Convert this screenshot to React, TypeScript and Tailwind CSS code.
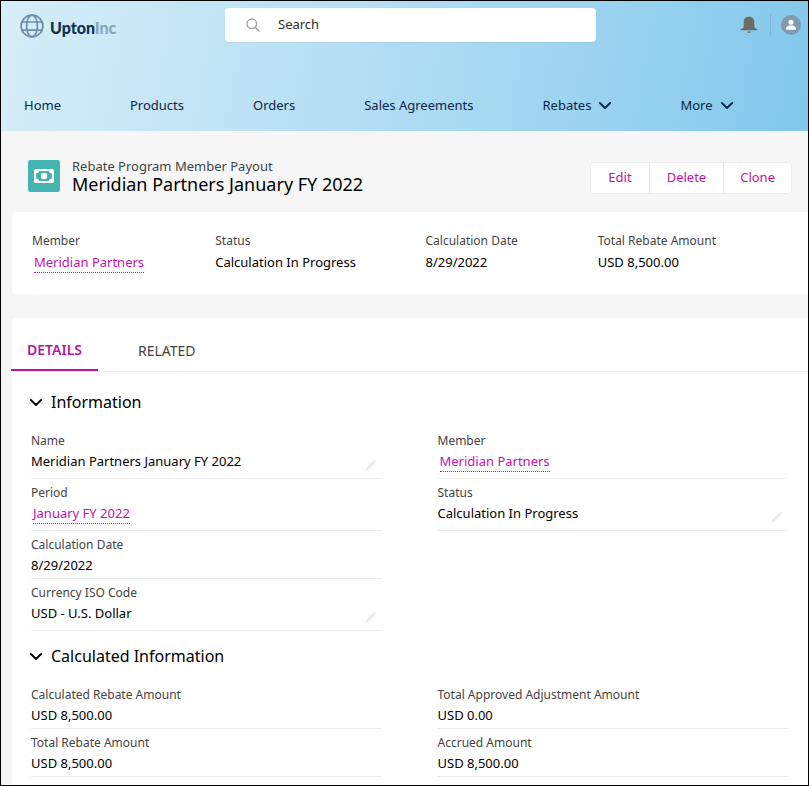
import type { ReactNode } from "react";
import { useState } from "react";

const navItems = [
  { label: "Home" },
  { label: "Products" },
  { label: "Orders" },
  { label: "Sales Agreements" },
  { label: "Rebates", menu: true },
  { label: "More", menu: true },
];

function Chevron() {
  return (
    <svg
      viewBox="0 0 12 8"
      className="h-2 w-3 shrink-0"
      fill="none"
      stroke="currentColor"
      strokeWidth="1.8"
      strokeLinecap="round"
      strokeLinejoin="round"
      aria-hidden="true"
    >
      <path d="M.9 2 6 7 11.1 2" />
    </svg>
  );
}

function Pencil() {
  return (
    <svg viewBox="0 0 14 14" className="size-3.5" fill="#ececef" aria-hidden="true">
      <path d="M10.6 1.2 12.8 3.4 11.6 4.6 9.4 2.4ZM8.8 3 11 5.2 4.2 12 1 13 2 9.8Z" />
    </svg>
  );
}

function Logo() {
  return (
    <a href="#" className="flex items-center gap-1.5">
      <svg
        viewBox="0 0 24 24"
        className="size-6"
        fill="none"
        stroke="#7090a8"
        strokeWidth="1.7"
        aria-hidden="true"
      >
        <circle cx="12" cy="12" r="10.9" />
        <ellipse cx="12" cy="12" rx="5.4" ry="10.9" />
        <path d="M1.8 8H22.200M1.8 16.200H22.200" />
      </svg>
      <span className="pt-1 font-[Lato,sans-serif] text-base leading-6 font-black text-[#10304f]">
        Upton<span className="text-[#83a7bf]">Inc</span>
      </span>
    </a>
  );
}

function Header() {
  return (
    <header className="flex h-[130px] flex-col justify-between bg-linear-100 from-[#d6eef8] via-[#b0dcf3] to-[#82c8ec] text-[#0b2545]">
      <div className="flex items-start pt-[7px] pr-[7px] pl-[19px]">
        <div className="w-[205px] shrink-0 pt-1">
          <Logo />
        </div>
        <label className="flex h-[34px] max-w-[371px] flex-1 items-center gap-[18px] rounded bg-white pl-[21px] shadow-xs">
          <svg
            viewBox="0 0 14 14"
            className="size-3.5 shrink-0"
            fill="none"
            stroke="#a3a3a3"
            strokeWidth="1.4"
            strokeLinecap="round"
            aria-hidden="true"
          >
            <circle cx="5.8" cy="5.8" r="4.8" />
            <path d="M9.4 9.4 13 13" />
          </svg>
          <input
            type="search"
            aria-label="Search"
            placeholder="Search"
            className="w-full bg-transparent text-[13px] outline-none placeholder:text-[#2e2e2e]"
          />
        </label>
        <div className="ml-auto flex items-center gap-2.5 pt-1.5">
          <button type="button" aria-label="Notifications" className="mr-0.5">
            <svg viewBox="0 0 18 18" className="size-[18px]" fill="#6d6c62" aria-hidden="true">
              <path d="M9 .8C5.800.8 3.700 3 3.700 6V10.800C3.700 11.600 3 12.200 1.800 12.700 1 13 .6 13.400.6 14.200H17.400C17.400 13.400 17 13 16.200 12.700 15 12.200 14.300 11.600 14.300 10.800V6C14.300 3 12.200.8 9 .8ZM7.200 15.400H10.800C10.500 16.600 9.900 17 9 17 8.100 17 7.500 16.600 7.200 15.400Z" />
            </svg>
          </button>
          <span className="h-[22px] w-px bg-[#7fb3d3]" />
          <button type="button" aria-label="Profile">
            <svg viewBox="0 0 20 20" className="size-5" aria-hidden="true">
              <circle cx="10" cy="10" r="10" fill="#8199b3" />
              <circle cx="10" cy="7.300" r="2.500" fill="#fff" />
              <path
                d="M5 14.800V13.600C5 12 6.800 11 8.400 10.600H11.600C13.200 11 15 12 15 13.600V14.800Z"
                fill="#fff"
              />
            </svg>
          </button>
        </div>
      </div>
      <nav className="flex gap-[69px] px-[23px] pb-4 text-[13px] leading-5 whitespace-nowrap">
        {navItems.map((item) =>
          item.menu ? (
            <button key={item.label} type="button" className="flex items-center gap-2">
              {item.label}
              <Chevron />
            </button>
          ) : (
            <a key={item.label} href="#">
              {item.label}
            </a>
          )
        )}
      </nav>
    </header>
  );
}

function RecordLink({ children }: { children: ReactNode }) {
  return (
    <a
      href="#"
      className="ml-0.5 inline-block border-b border-dotted border-[#b5179e] leading-5 text-[#c411b0]"
    >
      {children}
    </a>
  );
}

function RecordHeader() {
  return (
    <div className="flex items-end justify-between px-4 pt-[27px] pb-[18px]">
      <div className="flex items-start gap-3 pl-[11px]">
        <span className="mt-0.5 flex size-8 items-center justify-center rounded-xs bg-[#44b5b3]">
          <svg viewBox="0 0 20 14" className="h-3.5 w-5" aria-hidden="true">
            <rect width="20" height="14" rx="1.500" fill="#fff" />
            <path
              d="M5 2H15C15.200 3.600 16.400 4.300 18 4.500V9.500C16.400 9.700 15.200 10.400 15 12H5C4.800 10.400 3.600 9.700 2 9.500V4.500C3.600 4.300 4.800 3.600 5 2Z"
              fill="#44b5b3"
            />
            <circle cx="10" cy="7" r="3.200" fill="#fff" />
          </svg>
        </span>
        <div>
          <p className="text-[13px] leading-4 text-[#444444]">Rebate Program Member Payout</p>
          <h1 className="text-lg leading-5 text-black">Meridian Partners January FY 2022</h1>
        </div>
      </div>
      <div className="flex h-8 divide-x divide-[#e8e8e8] rounded border border-[#ececec] bg-white text-[13px] text-[#c411a0]">
        <button type="button" className="px-[17px]">
          Edit
        </button>
        <button type="button" className="px-[17px]">
          Delete
        </button>
        <button type="button" className="px-4">
          Clone
        </button>
      </div>
    </div>
  );
}

function SummaryItem({ label, children }: { label: string; children: ReactNode }) {
  return (
    <div>
      <dt className="text-xs leading-4 text-[#444444]">{label}</dt>
      <dd className="mt-[3px] text-[13px] leading-5 text-black">{children}</dd>
    </div>
  );
}

type FieldProps = { label: string; editable?: boolean; tall?: boolean; children: ReactNode };

function Field({ label, editable, tall, children }: FieldProps) {
  return (
    <div
      className={`relative border-b border-[#ececec] pt-1.5 ${tall ? "min-h-[52px]" : "min-h-12"}`}
    >
      <dt className="text-xs leading-4 text-[#444444]">{label}</dt>
      <dd className="mt-0.5 text-[13px] leading-5 text-black">{children}</dd>
      {editable && (
        <button type="button" aria-label={`Edit ${label}`} className="absolute right-1 bottom-1.5">
          <Pencil />
        </button>
      )}
    </div>
  );
}

function Section({ title, children }: { title: string; children: ReactNode }) {
  const [open, setOpen] = useState(true);

  return (
    <section className="pr-5 pl-[19px]">
      <h2>
        <button
          type="button"
          aria-expanded={open}
          onClick={() => setOpen(!open)}
          className="-ml-px flex items-center gap-[9px] text-base leading-6 text-black"
        >
          <Chevron />
          {title}
        </button>
      </h2>
      {open && <dl className="mt-[13px] grid grid-cols-2 items-start gap-x-14">{children}</dl>}
    </section>
  );
}

function App() {
  return (
    <div className="flex min-h-screen flex-col border border-black bg-[#f6f6f6] font-['Noto_Sans',sans-serif]">
      <Header />
      <main className="flex flex-1 flex-col">
        <RecordHeader />

        <dl className="ml-[11px] grid grid-cols-[183fr_210fr_172fr_210fr] rounded-l bg-white py-[21px] pl-5">
          <SummaryItem label="Member">
            <RecordLink>Meridian Partners</RecordLink>
          </SummaryItem>
          <SummaryItem label="Status">Calculation In Progress</SummaryItem>
          <SummaryItem label="Calculation Date">8/29/2022</SummaryItem>
          <SummaryItem label="Total Rebate Amount">USD 8,500.00</SummaryItem>
        </dl>

        <div className="mt-6 ml-[11px] flex-1 rounded-tl bg-white">
          <div role="tablist" className="flex border-b border-[#ececec] pt-3 text-sm">
            <button
              type="button"
              role="tab"
              aria-selected="true"
              className="-ml-px h-[41px] border-b-2 border-[#b5179e] px-4 font-semibold text-[#b5179e]"
            >
              DETAILS
            </button>
            <button type="button" role="tab" aria-selected="false" className="ml-6 px-4 text-[#444444]">
              RELATED
            </button>
          </div>

          <div className="flex flex-col gap-[13px] pt-[18px]">
            <Section title="Information">
              <div>
                <Field label="Name" tall editable>
                  Meridian Partners January FY 2022
                </Field>
                <Field label="Period" tall>
                  <RecordLink>January FY 2022</RecordLink>
                </Field>
                <Field label="Calculation Date">8/29/2022</Field>
                <Field label="Currency ISO Code" tall editable>
                  USD - U.S. Dollar
                </Field>
              </div>
              <div>
                <Field label="Member" tall>
                  <RecordLink>Meridian Partners</RecordLink>
                </Field>
                <Field label="Status" tall editable>
                  Calculation In Progress
                </Field>
              </div>
            </Section>

            <Section title="Calculated Information">
              <div>
                <Field label="Calculated Rebate Amount">USD 8,500.00</Field>
                <Field label="Total Rebate Amount">USD 8,500.00</Field>
              </div>
              <div>
                <Field label="Total Approved Adjustment Amount">USD 0.00</Field>
                <Field label="Accrued Amount">USD 8,500.00</Field>
              </div>
            </Section>
          </div>
        </div>
      </main>
    </div>
  );
}

export default App;
